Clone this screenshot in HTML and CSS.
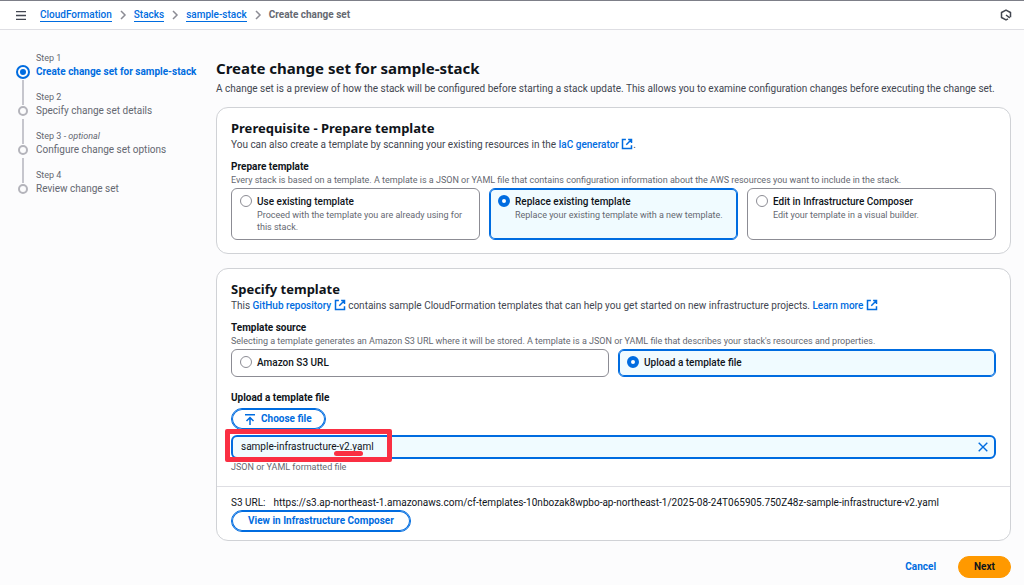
FILE: index.html
```html
<!DOCTYPE html>
<html lang="en">
<head>
<meta charset="utf-8">
<meta name="viewport" content="width=device-width, initial-scale=1">
<title>Create change set</title>
<link rel="stylesheet" href="styles.css">
</head>
<body>
<svg class="symbols" aria-hidden="true">
  <symbol id="external" viewBox="0 0 16 16"><path d="M9.500 2H14v4.500M7 9l7-7M14 9.500V14H2V2h4.500" fill="none" stroke="currentColor" stroke-width="2"/></symbol>
  <symbol id="chevron" viewBox="0 0 8 10"><path d="M2 1l4 4-4 4" fill="none" stroke="currentColor" stroke-width="1.500"/></symbol>
</svg>
<header class="topbar">
  <button class="icon-button" type="button" aria-label="Open navigation">
    <svg width="10" height="9" viewBox="0 0 10 9"><path d="M0 .7h10M0 4.500h10M0 8.300h10" stroke="currentColor" stroke-width="1.300"/></svg>
  </button>
  <nav class="breadcrumbs" aria-label="Breadcrumbs">
    <a href="#">CloudFormation</a>
    <svg class="chevron"><use href="#chevron"/></svg>
    <a href="#">Stacks</a>
    <svg class="chevron"><use href="#chevron"/></svg>
    <a href="#">sample-stack</a>
    <svg class="chevron"><use href="#chevron"/></svg>
    <span>Create change set</span>
  </nav>
  <button class="icon-button assistant" type="button" aria-label="Assistant">
    <svg width="12" height="12" viewBox="0 0 12 12"><path d="M8 9.800 6 10.900 1.500 8.500v-5L6 1.100l4.500 2.400v4.800M6 6l3.800 2.800" fill="none" stroke="currentColor" stroke-width="1.500" stroke-linejoin="round"/></svg>
  </button>
</header>
<div class="layout">
  <nav class="steps" aria-label="Steps">
    <ol class="step-list">
      <li class="step current"><span class="step-number">Step 1</span><a class="step-title" href="#" aria-current="step">Create change set for sample-stack</a></li>
      <li class="step"><span class="step-number">Step 2</span><span class="step-title">Specify change set details</span></li>
      <li class="step"><span class="step-number">Step 3 - <em>optional</em></span><span class="step-title">Configure change set options</span></li>
      <li class="step"><span class="step-number">Step 4</span><span class="step-title">Review change set</span></li>
    </ol>
  </nav>
  <main class="content">
    <h1>Create change set for sample-stack</h1>
    <p class="description">A change set is a preview of how the stack will be configured before starting a stack update. This allows you to examine configuration changes before executing the change set.</p>

    <section class="card">
      <div class="card-body">
        <h2>Prerequisite - Prepare template</h2>
        <p class="description">You can also create a template by scanning your existing resources in the <a href="#">IaC generator <svg class="external"><use href="#external"/></svg></a>.</p>
        <fieldset class="field">
          <legend>Prepare template</legend>
          <p class="hint">Every stack is based on a template. A template is a JSON or YAML file that contains configuration information about the AWS resources you want to include in the stack.</p>
          <div class="tiles three">
            <label class="tile"><input type="radio" name="prepare"><span class="tile-text"><span class="tile-title">Use existing template</span><span class="hint">Proceed with the template you are already using for this stack.</span></span></label>
            <label class="tile"><input type="radio" name="prepare" checked><span class="tile-text"><span class="tile-title">Replace existing template</span><span class="hint">Replace your existing template with a new template.</span></span></label>
            <label class="tile"><input type="radio" name="prepare"><span class="tile-text"><span class="tile-title">Edit in Infrastructure Composer</span><span class="hint">Edit your template in a visual builder.</span></span></label>
          </div>
        </fieldset>
      </div>
    </section>

    <section class="card">
      <div class="card-body">
        <h2>Specify template</h2>
        <p class="description">This <a href="#">GitHub repository <svg class="external"><use href="#external"/></svg></a> contains sample CloudFormation templates that can help you get started on new infrastructure projects. <a href="#">Learn more <svg class="external"><use href="#external"/></svg></a></p>
        <fieldset class="field">
          <legend>Template source</legend>
          <p class="hint">Selecting a template generates an Amazon S3 URL where it will be stored. A template is a JSON or YAML file that describes your stack's resources and properties.</p>
          <div class="tiles two">
            <label class="tile"><input type="radio" name="source"><span class="tile-title">Amazon S3 URL</span></label>
            <label class="tile"><input type="radio" name="source" checked><span class="tile-title">Upload a template file</span></label>
          </div>
        </fieldset>
        <div class="upload" role="group" aria-labelledby="upload-label">
          <div class="label" id="upload-label">Upload a template file</div>
          <button class="button choose" type="button"><svg width="10" height="11" viewBox="0 0 10 11"><path d="M0 .8h10M5 11V4M1.500 7 5 3.500 8.500 7" fill="none" stroke="currentColor" stroke-width="1.500"/></svg>Choose file</button>
          <div class="file">
            <span class="file-name">sample-infrastructure-v2.yaml</span>
            <button class="dismiss" type="button" aria-label="Remove file"><svg width="10" height="10" viewBox="0 0 10 10"><path d="M.7.7l8.600 8.600M9.300.7.7 9.300" stroke="currentColor" stroke-width="1.400"/></svg></button>
            <span class="mark-box"></span>
            <span class="mark-line"></span>
          </div>
          <p class="hint">JSON or YAML formatted file</p>
        </div>
      </div>
      <footer class="card-footer">
        <p class="url"><span class="url-label">S3 URL:</span><span>https://s3.ap-northeast-1.amazonaws.com/cf-templates-10nbozak8wpbo-ap-northeast-1/2025-08-24T065905.750Z48z-sample-infrastructure-v2.yaml</span></p>
        <button class="button" type="button">View in Infrastructure Composer</button>
      </footer>
    </section>

    <div class="actions">
      <button class="button link" type="button">Cancel</button>
      <button class="button primary" type="button">Next</button>
    </div>
  </main>
</div>
</body>
</html>
```
FILE: styles.css
```css
:root {
  --blue: #006ce0;
  --text: #0f141a;
  --body: #424650;
  --muted: #656871;
  --line: #dedee3;
}
*, ::before, ::after { box-sizing: border-box; }
body {
  margin: 0;
  background: #fcfcfd;
  color: var(--text);
  font: 10px/14px Roboto, "Open Sans", sans-serif;
}
h1, h2, p, ol { margin: 0; padding: 0; }
button { font: inherit; cursor: pointer; }
a { color: var(--blue); text-decoration: none; }
.symbols { position: absolute; width: 0; height: 0; }

.topbar {
  display: flex;
  align-items: center;
  height: 30px;
  padding: 0 12px 0 16px;
  background: #fff;
  border-top: 1px solid #7d7f88;
  border-bottom: 1px solid var(--line);
}
.icon-button {
  display: flex;
  padding: 0;
  border: 0;
  background: none;
  color: var(--body);
}
.assistant { margin-left: auto; }
.breadcrumbs {
  display: flex;
  align-items: center;
  gap: 7px;
  margin-left: 14px;
  color: var(--muted);
  font-weight: 700;
}
.breadcrumbs a { border-bottom: 1px solid var(--blue); font-weight: 500; line-height: 13px; }
.chevron { width: 8px; height: 10px; color: #8c8c94; }

.layout {
  display: grid;
  grid-template-columns: 184px minmax(0, 1fr);
  gap: 16px;
  padding: 21px 13px 7px 16px;
}
.step-list { list-style: none; }
.step {
  position: relative;
  height: 39px;
  padding-left: 20px;
  color: var(--muted);
}
.step-number, .step-title { display: block; }
.step-number { font-size: 9px; }
.step::before {
  content: "";
  position: absolute;
  left: 2px;
  top: 16px;
  width: 10px;
  height: 10px;
  border: 2px solid #b4b4bb;
  border-radius: 50%;
}
.step:not(:last-child)::after {
  content: "";
  position: absolute;
  left: 6px;
  top: 29px;
  width: 2px;
  height: 25px;
  background: #c6c6cd;
}
.current .step-title { color: var(--blue); font-weight: 700; }
.step.current::before {
  left: 0;
  top: 14px;
  width: 14px;
  height: 14px;
  padding: 2px;
  border: 2px solid var(--blue);
  background: var(--blue) content-box;
}

.content { padding-top: 7px; }
h1, h2 { font-family: "Noto Sans", "Open Sans", sans-serif; font-weight: 700; }
h1 { font-size: 15px; line-height: 20px; }
h2 { font-size: 13px; line-height: 18px; }
.description { color: var(--body); line-height: 15px; }
h1 + .description { margin-top: 3px; }
.description a { font-weight: 500; }
.external { width: 12px; height: 12px; vertical-align: -2px; }

.card {
  margin-top: 14px;
  background: #fff;
  border: 1px solid #d0d2d6;
  border-radius: 12px;
}
.description + .card { margin-top: 11px; }
.card-body { padding: 11px 14px 13px; }
.field { margin: 8px 0 0; padding: 0; border: 0; min-width: 0; }
legend, .label { padding: 0; font-weight: 700; }
.hint { color: var(--muted); font-size: 9px; line-height: 12px; }
.tiles { display: grid; gap: 9px; margin-top: 2px; }
.three { grid-template-columns: repeat(3, minmax(0, 1fr)); }
.two { grid-template-columns: repeat(2, minmax(0, 1fr)); }
.tile {
  display: flex;
  align-items: flex-start;
  gap: 5px;
  padding: 6px 8px;
  border: 1px solid #8c8c94;
  border-radius: 6px;
  font-weight: 500;
}
.tile:has(:checked) {
  border-color: var(--blue);
  background: #f0fbff;
  box-shadow: inset 0 0 0 1px var(--blue);
}
.tile-title, .tile .hint { display: block; }
.tile .hint { font-weight: 400; }
.tile input {
  appearance: none;
  flex: none;
  width: 12px;
  height: 12px;
  margin: 0;
  border: 1px solid #8c8c94;
  border-radius: 50%;
  background: #fff;
}
.tile input:checked { border: 4px solid var(--blue); }

.upload { margin-top: 14px; }
.button {
  display: inline-flex;
  align-items: center;
  justify-content: center;
  height: 22px;
  padding: 0 16px;
  border: 1px solid var(--blue);
  border-radius: 11px;
  background: #fff;
  box-shadow: inset 0 0 0 1px var(--blue);
  color: var(--blue);
  font-weight: 700;
}
.choose { display: flex; gap: 6px; margin-top: 3px; padding: 0 13px; }
.file {
  position: relative;
  display: flex;
  align-items: center;
  justify-content: space-between;
  height: 24px;
  margin: 5px 0 2px;
  padding: 0 6px 0 8px;
  border: 2px solid var(--blue);
  border-radius: 6px;
  background: #f0fbff;
}
.dismiss { display: flex; padding: 0; border: 0; background: none; color: var(--blue); }
.mark-box {
  position: absolute;
  left: -8px;
  top: -8px;
  width: 167px;
  height: 33px;
  border: 5px solid #fa2f43;
  border-radius: 2px;
}
.mark-line {
  position: absolute;
  left: 101px;
  top: 14px;
  width: 29px;
  height: 5px;
  border-radius: 3px;
  background: #fa2f43;
}
.card-footer { padding: 9px 14px 8px; border-top: 1px solid var(--line); }
.url { display: flex; gap: 8px; }
.url-label { flex: none; }
.actions { display: flex; justify-content: flex-end; gap: 5px; margin-top: 15px; }
.link { border-color: transparent; background: none; box-shadow: none; }
.primary { padding: 0 15px; border-color: #ff9900; background: #ff9900; box-shadow: none; color: var(--text); }
```
